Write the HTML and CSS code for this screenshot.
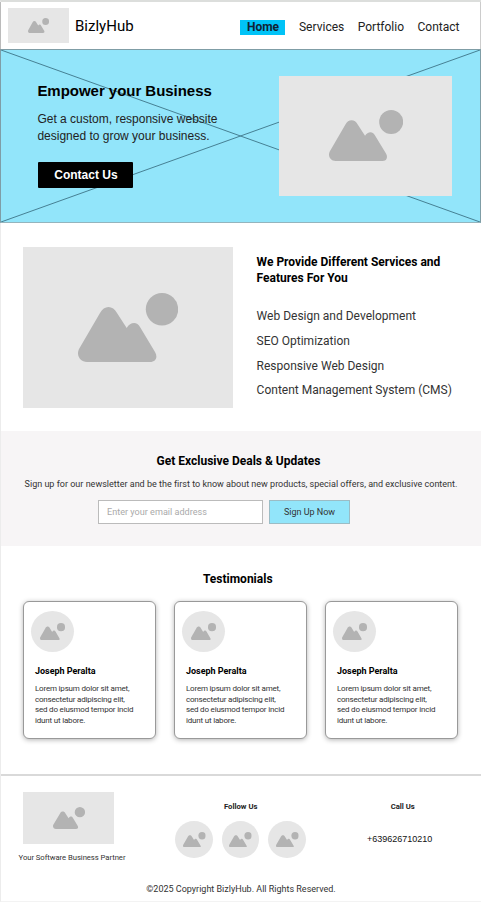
FILE: index.html
```html
<!DOCTYPE html>
<html lang="en">
<head>
<meta charset="utf-8">
<title>BizlyHub</title>
<link rel="stylesheet" href="styles.css">
</head>
<body>
<svg class="defs" aria-hidden="true">
  <symbol id="picture" viewBox="0 0 100 69" preserveAspectRatio="none">
    <circle cx="84" cy="16.3" r="16.2"/>
    <path d="M9 69C2 69-2 62 1 56L22 20C26 12 35 12 39 20L48.7 35C52 29 59 28 62 34L77 59C80 64 78 69 72 69Z"/>
  </symbol>
</svg>
<div class="page">
  <header class="header">
    <div class="ph logo"><svg><use href="#picture"/></svg></div>
    <div class="brand">BizlyHub</div>
    <nav class="nav">
      <a class="active">Home</a><a>Services</a><a>Portfolio</a><a>Contact</a>
    </nav>
  </header>

  <section class="hero">
    <svg class="cross" viewBox="0 0 480 173" preserveAspectRatio="none"><path d="M0 0L480 173M0 173L480 0"/></svg>
    <div class="hero-copy">
      <h1>Empower your Business</h1>
      <p>Get a custom, responsive website<br>designed to grow your business.</p>
      <a class="cta">Contact Us</a>
    </div>
    <div class="ph hero-pic"><svg><use href="#picture"/></svg></div>
  </section>

  <section class="services">
    <div class="ph services-pic"><svg><use href="#picture"/></svg></div>
    <div class="services-copy">
      <h2>We Provide Different Services and<br>Features For You</h2>
      <ul>
        <li>Web Design and Development</li>
        <li>SEO Optimization</li>
        <li>Responsive Web Design</li>
        <li>Content Management System (CMS)</li>
      </ul>
    </div>
  </section>

  <section class="newsletter">
    <h2>Get Exclusive Deals &amp; Updates</h2>
    <p>Sign up for our newsletter and be the first to know about new products, special offers, and exclusive content.</p>
    <div class="form">
      <div class="field">Enter your email address</div>
      <div class="submit">Sign Up Now</div>
    </div>
  </section>

  <section class="testimonials">
    <h2>Testimonials</h2>
    <div class="cards">
      <article class="card">
        <div class="ph avatar"><svg><use href="#picture"/></svg></div>
        <h3>Joseph Peralta</h3>
        <p>Lorem ipsum dolor sit amet,<br>consectetur adipiscing elit,<br>sed do eiusmod tempor incid<br>idunt ut labore.</p>
      </article>
      <article class="card">
        <div class="ph avatar"><svg><use href="#picture"/></svg></div>
        <h3>Joseph Peralta</h3>
        <p>Lorem ipsum dolor sit amet,<br>consectetur adipiscing elit,<br>sed do eiusmod tempor incid<br>idunt ut labore.</p>
      </article>
      <article class="card">
        <div class="ph avatar"><svg><use href="#picture"/></svg></div>
        <h3>Joseph Peralta</h3>
        <p>Lorem ipsum dolor sit amet,<br>consectetur adipiscing elit,<br>sed do eiusmod tempor incid<br>idunt ut labore.</p>
      </article>
    </div>
  </section>

  <footer class="footer">
    <div class="footer-cols">
      <div class="about">
        <div class="ph footer-logo"><svg><use href="#picture"/></svg></div>
        <p>Your Software Business Partner</p>
      </div>
      <div class="follow">
        <h4>Follow Us</h4>
        <div class="socials">
          <div class="ph social"><svg><use href="#picture"/></svg></div>
          <div class="ph social"><svg><use href="#picture"/></svg></div>
          <div class="ph social"><svg><use href="#picture"/></svg></div>
        </div>
      </div>
      <div class="call">
        <h4>Call Us</h4>
        <p>+639626710210</p>
      </div>
    </div>
    <p class="copyright">©2025 Copyright BizlyHub. All Rights Reserved.</p>
  </footer>
</div>
</body>
</html>
```
FILE: styles.css
```css
* { box-sizing: border-box; margin: 0; padding: 0; }
body { width: 481px; height: 904px; overflow: hidden; background: #fff; font-family: Roboto, sans-serif; color: #333; white-space: nowrap; }
.defs { position: absolute; width: 0; height: 0; }
.page { height: 902px; border-top: 2px solid #dcdedc; border-left: 1px solid #ececec; border-bottom: 1px solid #f3f3f3; }
h1, h2, h3, h4 { color: #000; font-weight: 700; }
ul { list-style: none; }

.ph { display: flex; align-items: center; justify-content: center; flex: none; background: #e6e6e6; }
.ph svg { display: block; fill: #b3b3b3; }

.header { display: flex; align-items: center; height: 47px; padding-left: 7px; border-left: 1px solid #bbb; margin-left: -1px; border-right: 1px solid #ccc; }
.logo { width: 61px; height: 35px; }
.logo svg { width: 21px; height: 15px; }
.brand { margin-left: 6px; font-size: 15px; line-height: 20px; color: #000; }
.nav { display: flex; margin-left: auto; margin-top: 4.6px; padding-right: 20.5px; gap: 13.5px; font-size: 12px; line-height: 15px; color: #222; }
.nav .active { width: 45px; text-align: center; background: #00c3f7; font-weight: 700; color: #123; }

.hero { position: relative; display: flex; justify-content: space-between; height: 174px; margin-left: -1px; padding: 26px 28px 0 36.4px; background: #92e5fa; border: 1px solid #7f9da6; border-bottom-color: #94b4bd; }
.cross { position: absolute; left: 0; top: 0; width: 100%; height: 100%; fill: none; stroke: #467f92; stroke-width: 1; }
.hero-copy { position: relative; padding-top: 5px; font-family: "Liberation Sans", Arial, sans-serif; }
.hero h1 { font-size: 15px; line-height: 20px; letter-spacing: -0.03px; }
.hero p { margin-top: 10px; font-size: 12px; line-height: 17.3px; color: #222; }
.cta { display: block; width: 95px; height: 26px; margin: 16.4px 0 0 1px; background: #000; border-radius: 1px; color: #fff; font-size: 12px; font-weight: 700; line-height: 26px; text-align: center; }
.hero-pic { position: relative; width: 173px; height: 119.5px; }
.hero-pic svg { width: 74px; height: 51px; }

.services { display: flex; height: 208px; padding: 24px 0 0 22.3px; }
.services-pic { width: 210px; height: 161px; }
.services-pic svg { width: 100px; height: 69px; }
.services-copy { margin-left: 23.3px; padding-top: 7px; }
.services h2 { font-size: 12px; line-height: 16px; }
.services ul { margin-top: 18px; font-size: 12px; line-height: 24.8px; color: #333; }

.newsletter { height: 115px; padding-top: 22px; background: #f7f5f6; text-align: center; }
.newsletter h2 { padding-right: 5px; font-size: 12px; line-height: 16px; }
.newsletter p { margin-top: 8px; font-size: 9px; line-height: 14px; letter-spacing: 0.005px; }
.form { display: flex; gap: 6px; margin: 9px 0 0 97px; font-size: 9.1px; line-height: 22px; }
.field { width: 165px; height: 24px; padding-left: 8px; background: #fff; border: 1px solid #bbb; color: #aaa; text-align: left; }
.submit { width: 81px; height: 24px; background: #92e5fa; border: 1px solid #9bbcc5; font-size: 9px; }

.testimonials { height: 228px; padding-top: 25px; }
.testimonials h2 { font-size: 12px; line-height: 16px; text-align: center; padding-right: 6.5px; }
.cards { display: grid; grid-template-columns: repeat(3, 133px); gap: 18px; margin: 14px 0 0 21.7px; }
.card { height: 138px; padding: 9px 0 0 11.3px; background: #fff; border: 1px solid #999; border-radius: 6px; box-shadow: 0 1px 5px rgba(0, 0, 0, .3); }
.avatar { width: 43px; height: 41px; margin-left: -4.4px; border-radius: 50%; }
.avatar svg { width: 25px; height: 17.5px; }
.card h3 { margin-top: 13px; font-size: 9px; line-height: 12px; letter-spacing: -0.02px; }
.card p { margin-top: 7px; font-size: 8px; line-height: 10.7px; letter-spacing: -0.19px; }

.footer { border-top: 2px solid #d9d9d9; padding-top: 16px; }
.footer-cols { display: grid; grid-template-columns: 142px 195.4px 1fr; height: 82px; text-align: center; }
.footer-logo { width: 91px; height: 52px; margin-left: 22px; }
.footer-logo svg { width: 32px; height: 22px; }
.about p { margin-top: 9px; font-size: 7.7px; line-height: 10px; letter-spacing: -0.05px; }
.footer h4 { margin-top: 9.5px; font-size: 7.7px; line-height: 10px; color: #222; }
.socials { display: flex; justify-content: center; gap: 9px; margin-top: 9.5px; }
.social { width: 37.5px; height: 37px; border-radius: 50%; }
.social svg { width: 22.7px; height: 15.7px; }
.call { padding-right: 20px; }
.call h4 { padding-left: 6px; }
.call p { margin-top: 21.5px; font: 9px/12px "Liberation Sans", Arial, sans-serif; color: #111; }
.copyright { margin-top: 9px; font-size: 9px; line-height: 12px; text-align: center; }
```
